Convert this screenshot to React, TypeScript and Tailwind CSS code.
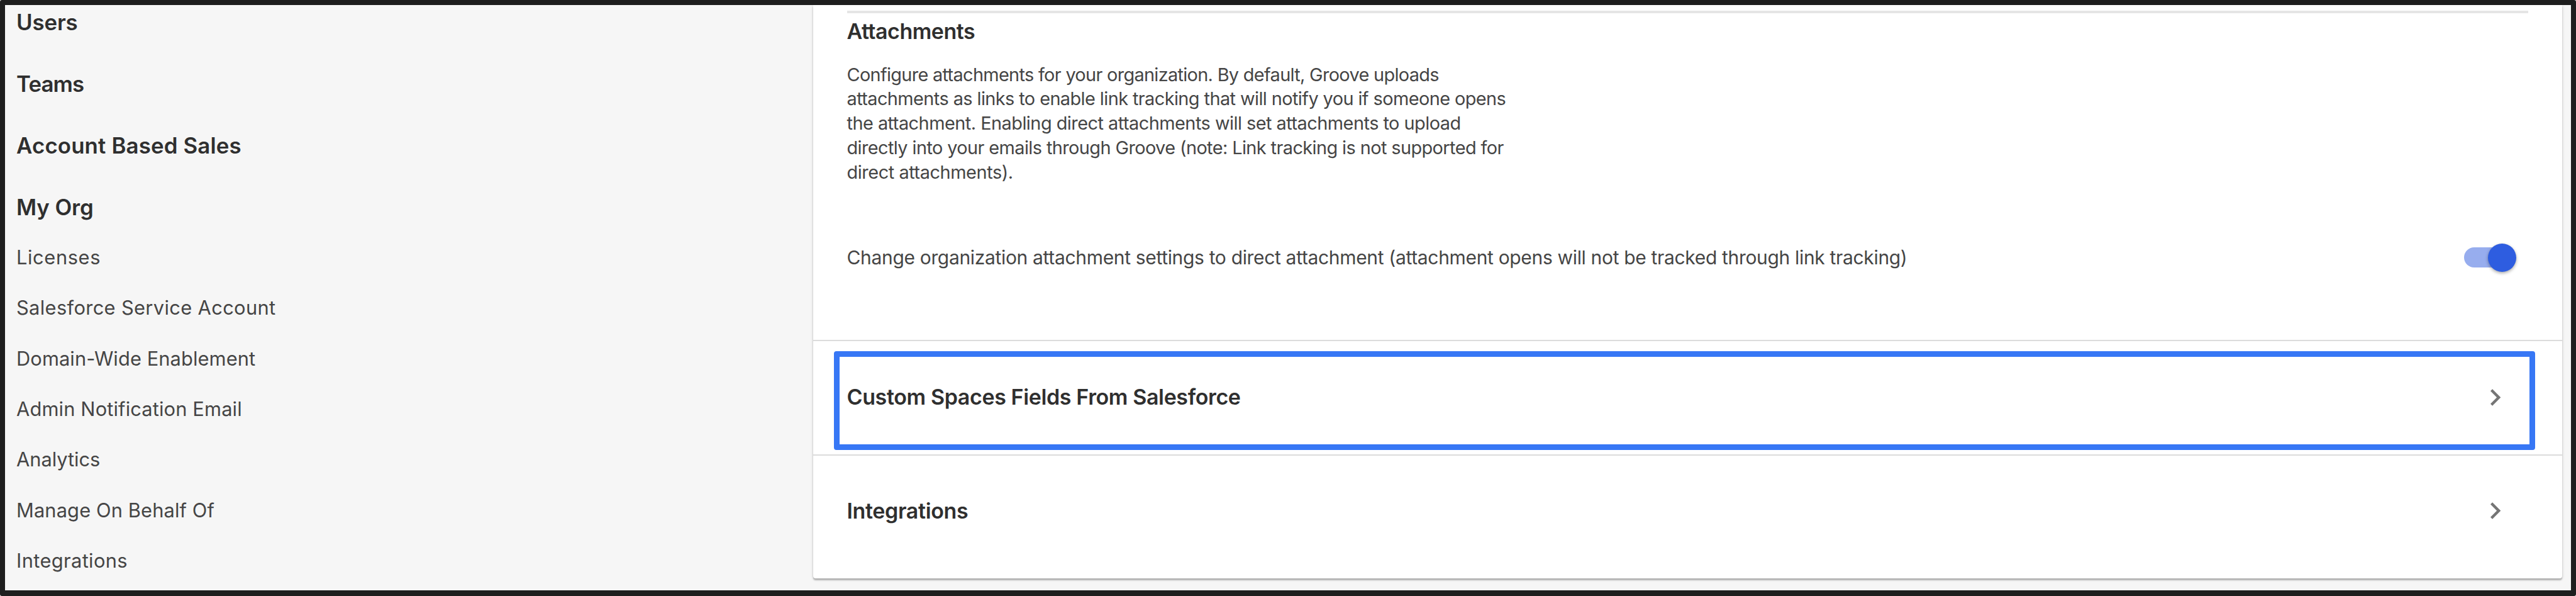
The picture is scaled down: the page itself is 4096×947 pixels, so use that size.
type NavItem = { label: string; spacing: string };

const sections: NavItem[] = [
  { label: "Users", spacing: "tracking-[-0.13px]" },
  { label: "Teams", spacing: "tracking-[-0.87px]" },
  { label: "Account Based Sales", spacing: "tracking-[0.16px]" },
  { label: "My Org", spacing: "tracking-[-0.08px]" },
];

const orgPages: NavItem[] = [
  { label: "Licenses", spacing: "tracking-[0.62px]" },
  { label: "Salesforce Service Account", spacing: "tracking-[0.36px]" },
  { label: "Domain-Wide Enablement", spacing: "tracking-[0.1px]" },
  { label: "Admin Notification Email", spacing: "tracking-[0.15px]" },
  { label: "Analytics", spacing: "tracking-[-0.03px]" },
  { label: "Manage On Behalf Of", spacing: "tracking-[0.13px]" },
  { label: "Integrations", spacing: "tracking-[0.38px]" },
];

const description: NavItem[] = [
  {
    label: "Configure attachments for your organization. By default, Groove uploads",
    spacing: "tracking-[-0.684px]",
  },
  {
    label: "attachments as links to enable link tracking that will notify you if someone opens",
    spacing: "tracking-[-0.584px]",
  },
  {
    label: "the attachment. Enabling direct attachments will set attachments to upload",
    spacing: "tracking-[-0.523px]",
  },
  {
    label: "directly into your emails through Groove (note: Link tracking is not supported for",
    spacing: "tracking-[-0.594px]",
  },
  { label: "direct attachments).", spacing: "tracking-[-0.435px]" },
];

function Sidebar() {
  return (
    <nav className="w-[1285px] shrink-0 pt-[7px] pl-[18px] whitespace-nowrap">
      <ul className="flex flex-col gap-[57.85px] text-[34.8px] leading-[40px] font-semibold text-[#2f2f2f]">
        {sections.map((s) => (
          <li key={s.label} className={s.spacing}>
            {s.label}
          </li>
        ))}
      </ul>
      <ul className="mt-[40.5px] flex flex-col gap-[40.35px] text-[30.8px] leading-[40px] text-[#454545]">
        {orgPages.map((p) => (
          <li key={p.label} className={p.spacing}>
            {p.label}
          </li>
        ))}
      </ul>
    </nav>
  );
}

function Toggle() {
  return (
    <button
      type="button"
      role="switch"
      aria-checked="true"
      aria-label="Direct attachment"
      className="flex h-[45px] w-[83px] items-center"
    >
      <span className="h-[32px] w-[77px] shrink-0 rounded-full bg-[#97adee]" />
      <span className="-ml-[39px] size-[45px] shrink-0 rounded-full bg-[#2e5de0] shadow-[0_2px_5px_rgba(0,0,0,0.35)]" />
    </button>
  );
}

function Chevron() {
  return (
    <svg viewBox="0 0 24 24" className="size-[53px] shrink-0" fill="#757575">
      <path d="M10 6 8.59 7.41 13.17 12l-4.58 4.59L10 18l6-6z" />
    </svg>
  );
}

export default function App() {
  return (
    <div className="h-[947px] w-[4096px] bg-white">
      <div className="flex h-full w-full overflow-hidden rounded-[3px] border-8 border-b-9 border-[#1e1e1e] bg-[#f6f6f6] font-['Inter',sans-serif]">
        <Sidebar />
        <main className="h-[911px] w-[2781px] shrink-0 rounded-b-[4px] bg-white whitespace-nowrap text-[#2f2f2f] shadow-[0_3px_2px_rgba(0,0,0,0.22),0_1px_5px_rgba(0,0,0,0.16)]">
          <section className="h-[532px] pt-[8.5px] pr-[54px] pl-[53.5px]">
            <div className="h-[4px] bg-[#e5e5e5]" />
            <h2 className="mt-[9px] text-[34px] leading-[40px] font-semibold tracking-[-0.49px]">
              Attachments
            </h2>
            <p className="mt-[30px] text-[28.9px] leading-[38.9px] text-[#454545]">
              {description.map((line) => (
                <span key={line.label} className={`block ${line.spacing}`}>
                  {line.label}
                </span>
              ))}
            </p>
            <div className="mt-[92.5px] flex h-[45px] items-center justify-between pr-[19px]">
              <span className="text-[30px] leading-[45px] tracking-[-0.332px] text-[#454545]">
                Change organization attachment settings to direct attachment (attachment opens will not
                be tracked through link tracking)
              </span>
              <Toggle />
            </div>
          </section>
          <section className="flex h-[181.5px] items-start border-t-2 border-[#dcdcdc] pt-[16.3px] pl-[33px]">
            <div className="flex h-[156.7px] w-[2705px] items-center justify-between rounded-[4px] border-9 border-[#3777f5] pr-[28px] pb-[10px] pl-[11.5px]">
              <h2 className="mb-[2px] text-[34px] leading-[40px] font-semibold tracking-[-0.38px]">
                Custom Spaces Fields From Salesforce
              </h2>
              <Chevron />
            </div>
          </section>
          <section className="flex h-[180px] items-center justify-between border-t-2 border-[#dcdcdc] pr-[80px] pb-[2px] pl-[53.5px]">
            <h2 className="text-[34px] leading-[40px] font-semibold tracking-[-0.35px]">
              Integrations
            </h2>
            <Chevron />
          </section>
        </main>
      </div>
    </div>
  );
}
